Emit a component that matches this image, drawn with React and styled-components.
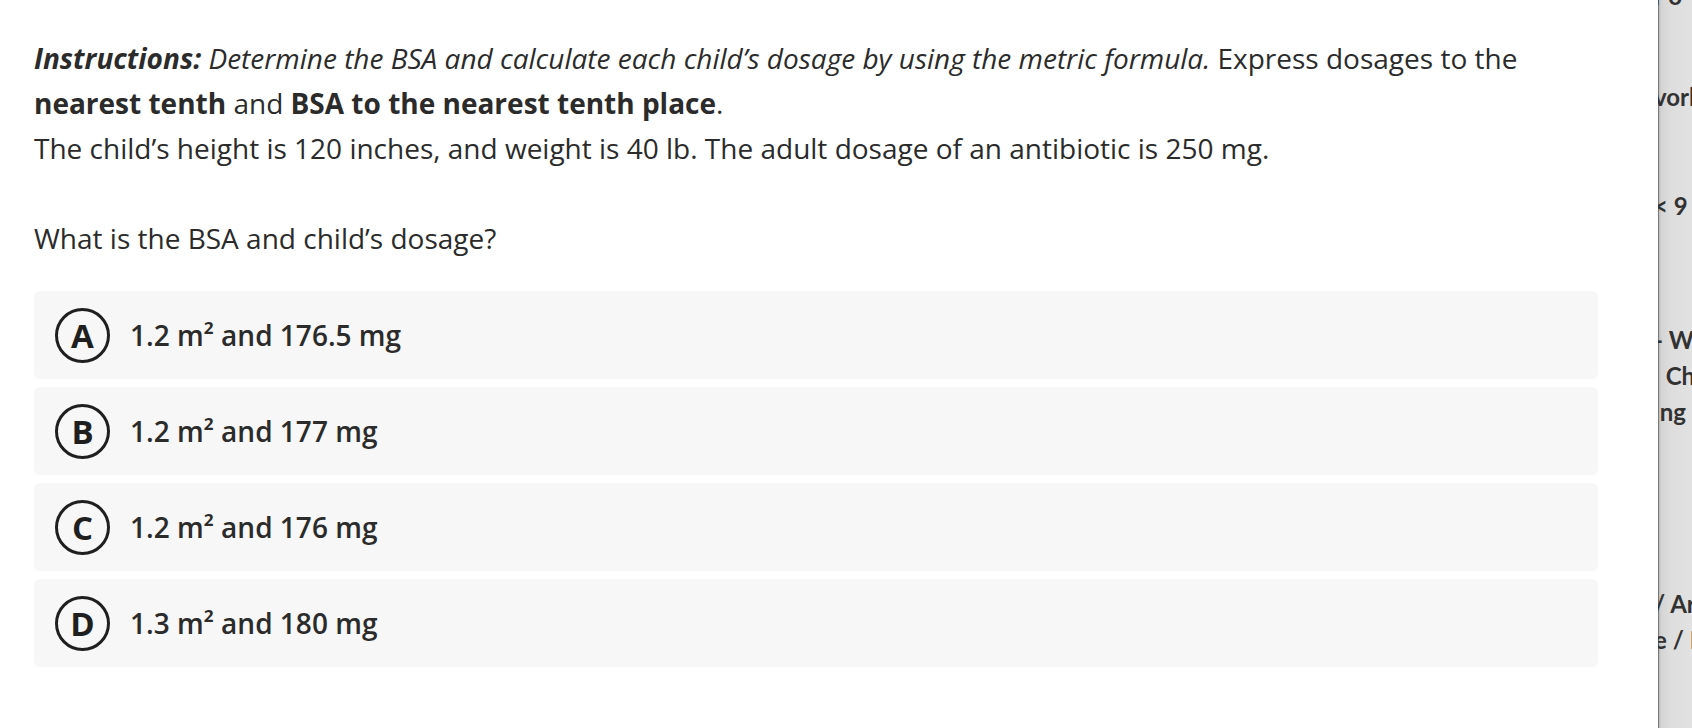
import React from "react";
import styled, { createGlobalStyle } from "styled-components";

const Global = createGlobalStyle`
  html, body { margin: 0; padding: 0; background: #ffffff; }
  body { font-family: "Open Sans", "Noto Sans", sans-serif; color: #2b2b2b; }
`;

const Page = styled.div`
  display: flex;
  width: 1692px;
  height: 728px;
  overflow: hidden;
`;

const Main = styled.main`
  flex: 1;
  padding: 36px 60px 0 34px;
`;

const Para = styled.p`
  margin: 0;
  font-size: 28px;
  line-height: 45px;
`;

const Question = styled(Para)`
  margin-top: 45px;
  margin-bottom: 30px;
`;

const Options = styled.div`
  display: flex;
  flex-direction: column;
  gap: 8px;
`;

const Option = styled.div`
  display: flex;
  align-items: center;
  gap: 20px;
  height: 88px;
  padding: 0 0 0 21px;
  background: #f7f7f7;
  border-radius: 6px;
`;

const Letter = styled.span`
  display: flex;
  align-items: center;
  justify-content: center;
  box-sizing: border-box;
  width: 55px;
  height: 55px;
  border: 3px solid #1f1f1f;
  border-radius: 50%;
  font-size: 33px;
  font-weight: 700;
  line-height: 1;
  color: #1f1f1f;
`;

const OptionText = styled.span`
  font-size: 28px;
  font-weight: 600;
  color: #2b2b2b;
`;

const Side = styled.aside`
  width: 34px;
  flex: none;
  background: linear-gradient(to right, #8a8a8a 0px, #b8b8b8 1px, #d4d4d4 3px, #dddddd 12px, #e2e2e2 100%);
  box-shadow: inset 1px 0 0 #7a7a7a;
  overflow: hidden;
`;

const SideList = styled.div`
  display: flex;
  flex-direction: column;
  margin-top: -22px;
  margin-left: -4px;
  font-family: "Lato", "DejaVu Sans", sans-serif;
  font-weight: 700;
  font-size: 24px;
  color: #323232;
  white-space: pre;
`;

const SideItem = styled.div`
  height: ${(p) => p.$h}px;
  line-height: ${(p) => p.$h}px;
`;

const options = [
  ["A", "1.2 m² and 176.5 mg"],
  ["B", "1.2 m² and 177 mg"],
  ["C", "1.2 m² and 176 mg"],
  ["D", "1.3 m² and 180 mg"],
];

const sideItems = [
  ["r o", 36],
  ["", 65],
  ["vorl", 36],
  ["", 73],
  ["< 9", 36],
  ["", 98],
  ["- W", 36],
  ["  Ch", 36],
  [" ng", 36],
  ["", 156],
  ["/ Ar", 36],
  ["e / N", 36],
];

export default function App() {
  return (
    <>
      <Global />
      <Page>
        <Main>
          <Para>
            <b><i>Instructions:</i></b> <i>Determine the BSA and calculate each child’s dosage by using the metric formula.</i> Express dosages to the{" "}
            <b>nearest tenth</b> and <b>BSA to the nearest tenth place</b>.
          </Para>
          <Para>The child’s height is 120 inches, and weight is 40 lb. The adult dosage of an antibiotic is 250 mg.</Para>
          <Question>What is the BSA and child’s dosage?</Question>
          <Options>
            {options.map(([l, t]) => (
              <Option key={l}>
                <Letter>{l}</Letter>
                <OptionText>{t}</OptionText>
              </Option>
            ))}
          </Options>
        </Main>
        <Side>
          <SideList>
            {sideItems.map(([t, h], i) => (
              <SideItem key={i} $h={h}>{t}</SideItem>
            ))}
          </SideList>
        </Side>
      </Page>
    </>
  );
}
